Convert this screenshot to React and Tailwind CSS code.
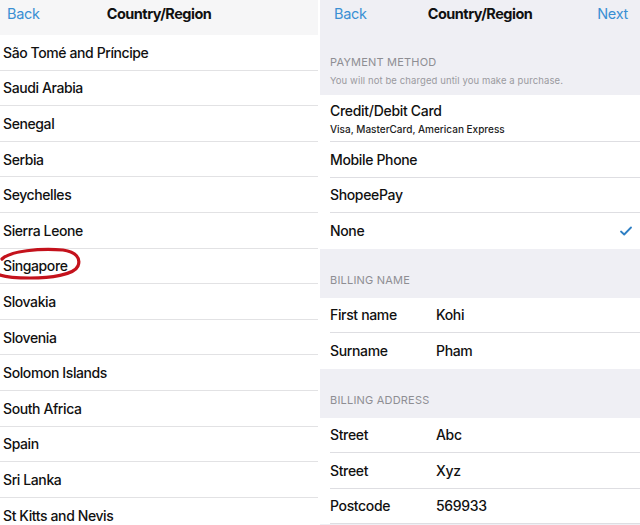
import React from 'react';

const countries = [
  'São Tomé and Príncipe',
  'Saudi Arabia',
  'Senegal',
  'Serbia',
  'Seychelles',
  'Sierra Leone',
  'Singapore',
  'Slovakia',
  'Slovenia',
  'Solomon Islands',
  'South Africa',
  'Spain',
  'Sri Lanka',
  'St Kitts and Nevis',
];

const font = { fontFamily: 'Inter, "Liberation Sans", sans-serif' };

function NavBar({ next, padLeft }) {
  return (
    <div className={`relative flex h-[35px] items-center pb-[7px] pr-[12px] text-[14.5px] tracking-[-0.3px] ${padLeft}`}>
      <span className="text-[#3a8fd3]">Back</span>
      <span className="absolute inset-x-0 text-center font-bold tracking-[-0.5px] text-[#111]">Country/Region</span>
      {next && <span className="ml-auto text-[#3a8fd3]">Next</span>}
    </div>
  );
}

function SectionHeader({ title, sub, className }) {
  return (
    <div className={`flex flex-col justify-end bg-[#efeff4] px-[10px] ${className}`}>
      <div className="text-[11px] uppercase tracking-[0.2px] text-[#8e8e93]">{title}</div>
      {sub && <div className="mt-[3px] text-[9.5px] tracking-[0.1px] text-[#9a9a9f]">{sub}</div>}
    </div>
  );
}

function Row({ children, last }) {
  return (
    <div className="ml-[10px] flex h-[35.5px] items-center border-b border-[#dedee2] pr-[8px] text-[14px] font-medium tracking-[-0.35px] text-[#111]" style={last ? { borderBottom: 'none' } : undefined}>
      {children}
    </div>
  );
}

function FieldRow({ label, value, last }) {
  return (
    <Row last={last}>
      <span className="w-[106px]">{label}</span>
      <span>{value}</span>
    </Row>
  );
}

export default function App() {
  return (
    <div className="flex h-[525px] w-[640px] overflow-hidden bg-white" style={font}>
      {/* left: country list */}
      <div className="w-[318px] shrink-0">
        <div className="bg-[#f6f6f7]">
          <NavBar padLeft="pl-[7px]" />
        </div>
        <div className="relative">
          {countries.map((c) => (
            <div key={c} className="flex h-[35.6px] items-center border-b border-[#e2e2e4] pl-[3px] text-[14px] font-medium tracking-[-0.4px] text-[#111]">
              {c}
            </div>
          ))}
          <svg className="absolute left-0 top-[211px]" width="84" height="36" viewBox="0 0 84 36">
            <path
              d="M2 13 C10 5 40 2 63 4 C76 6 81 12 78 20 C74 29 50 32 30 32 C14 32 3 30 0 29"
              fill="none"
              stroke="#c4121c"
              strokeWidth="3.2"
              strokeLinecap="round"
            />
          </svg>
        </div>
      </div>

      {/* right: payment form */}
      <div className="ml-[2px] flex-1 bg-[#efeff4]">
        <NavBar next padLeft="pl-[14px]" />
        <SectionHeader
          title="Payment Method"
          sub="You will not be charged until you make a purchase."
          className="h-[60px] pb-[7px]"
        />
        <div className="bg-white">
          <div className="ml-[10px] flex h-[47px] flex-col justify-center border-b border-[#dedee2] tracking-[-0.3px]">
            <div className="text-[14px] font-medium text-[#111]">Credit/Debit Card</div>
            <div className="mt-[1px] text-[10px] font-medium tracking-[0px] text-[#222]">Visa, MasterCard, American Express</div>
          </div>
          <Row>Mobile Phone</Row>
          <Row>ShopeePay</Row>
          <Row last>
            <span>None</span>
            <svg className="ml-auto" width="12" height="10" viewBox="0 0 12 10">
              <path d="M1 5.5 L4.2 8.5 L11 1.5" fill="none" stroke="#2e7fc4" strokeWidth="1.8" strokeLinecap="round" strokeLinejoin="round" />
            </svg>
          </Row>
        </div>
        <SectionHeader title="Billing Name" className="h-[49px] pb-[9px]" />
        <div className="bg-white">
          <FieldRow label="First name" value="Kohi" />
          <FieldRow label="Surname" value="Pham" last />
        </div>
        <SectionHeader title="Billing Address" className="h-[49px] pb-[9px]" />
        <div className="bg-white">
          <FieldRow label="Street" value="Abc" />
          <FieldRow label="Street" value="Xyz" />
          <FieldRow label="Postcode" value="569933" />
        </div>
      </div>
    </div>
  );
}
